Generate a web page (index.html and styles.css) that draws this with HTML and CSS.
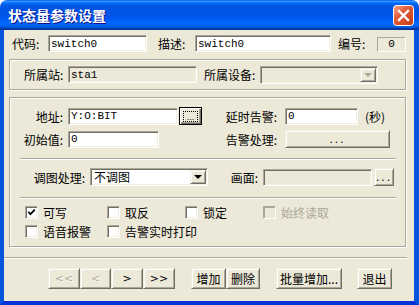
FILE: index.html
```html
<!DOCTYPE html>
<html lang="zh-CN">
<head>
  <meta charset="UTF-8">
  <title>状态量参数设置</title>
  <link rel="stylesheet" href="styles.css">
</head>
<body>

<div class="window">
  <div class="titlebar">
    <span class="title">状态量参数设置</span>
    <svg class="close" width="21" height="21" viewBox="0 0 21 21">
      <defs>
        <linearGradient id="closeGrad" x1="0" y1="0" x2="1" y2="1">
          <stop offset="0" stop-color="#F3A98F"/>
          <stop offset="0.4" stop-color="#E25B36"/>
          <stop offset="1" stop-color="#C13C14"/>
        </linearGradient>
      </defs>
      <rect x="0.5" y="0.5" width="20" height="20" rx="3" fill="url(#closeGrad)" stroke="#fff"/>
      <path d="M6 6L15 15M15 6L6 15" stroke="#fff" stroke-width="2.4" stroke-linecap="square"/>
    </svg>
  </div>

  <div class="client">
    <!-- 代码 / 描述 / 编号 -->
    <div class="row row-head">
      <label class="lbl w-code">代码:</label>
      <input class="field w-code-in" type="text" value="switch0" readonly>
      <label class="lbl w-desc">描述:</label>
      <input class="field w-desc-in" type="text" value="switch0" readonly>
      <label class="lbl w-no">编号:</label>
      <span class="numbox">0</span>
    </div>

    <!-- 所属站 -->
    <div class="group group-station">
      <label class="lbl w-sta">所属站:</label>
      <input class="field disabled w-sta-in" type="text" value="sta1" readonly>
      <label class="lbl w-dev">所属设备:</label>
      <div class="combo sunken disabled w-dev-in">
        <span class="combo-text"></span>
        <span class="combo-btn"><i class="tri tri-off"></i></span>
      </div>
    </div>

    <!-- 地址等 -->
    <div class="group group-main">
      <div class="row row-a">
        <label class="lbl r w-l1">地址:</label>
        <input class="field w-addr" type="text" value="Y:O:BIT" readonly>
        <button class="btn btn-focus w-addr-btn"><span class="focus-rect">...</span></button>
        <label class="lbl r w-l2a">延时告警:</label>
        <input class="field w-delay" type="text" value="0" readonly>
        <span class="unit">(秒)</span>
      </div>
      <div class="row row-b">
        <label class="lbl r w-l1">初始值:</label>
        <input class="field w-init" type="text" value="0" readonly>
        <label class="lbl r w-l2b">告警处理:</label>
        <button class="btn dots w-alarm">...</button>
      </div>

      <div class="sep"></div>

      <div class="row row-c">
        <label class="lbl r w-l3">调图处理:</label>
        <div class="combo sunken w-pic">
          <span class="combo-text">不调图</span>
          <span class="combo-btn"><i class="tri"></i></span>
        </div>
        <label class="lbl r w-l4">画面:</label>
        <input class="field disabled w-screen" type="text" value="" readonly>
        <button class="btn dots w-screen-btn">...</button>
      </div>

      <div class="sep"></div>

      <div class="checks">
        <label class="check"><span class="chk">
          <svg width="9" height="9" viewBox="0 0 9 9"><path d="M1.3 3.8L3.4 6.2L7.8 1.6" fill="none" stroke="#000" stroke-width="1.7"/></svg>
        </span>可写</label>
        <label class="check"><span class="chk"></span>取反</label>
        <label class="check"><span class="chk"></span>锁定</label>
        <label class="check off"><span class="chk"></span>始终读取</label>
        <label class="check"><span class="chk"></span>语音报警</label>
        <label class="check wide"><span class="chk"></span>告警实时打印</label>
      </div>
    </div>

    <div class="sep sep-full"></div>

    <div class="buttons">
      <button class="btn nav gray w32">&lt;&lt;</button>
      <button class="btn nav gray w31">&lt;</button>
      <button class="btn nav w32">&gt;</button>
      <button class="btn nav w32">&gt;&gt;</button>
      <button class="btn b-add">增加</button>
      <button class="btn b-del">删除</button>
      <button class="btn b-batch">批量增加...</button>
      <button class="btn b-exit">退出</button>
    </div>
  </div>
</div>

</body>
</html>
```

FILE: styles.css
```css
*{
  box-sizing: border-box;
}

body{
  margin: 0;
  background: #fff;
  font-family: "Noto Sans CJK SC", sans-serif;
  font-size: 12px;
  color: #000;
}

.window{
  width: 419px;
  height: 305px;
  display: flex;
  flex-direction: column;
}

/* title bar */
.titlebar{
  height: 30px;
  flex: none;
  display: flex;
  align-items: center;
  padding: 0 5px 0 8px;
  border-radius: 7px 7px 0 0;
  background: linear-gradient(to bottom, #0058EE 0%, #3593FF 4%, #288EFF 6%, #127DFF 8%, #036FFC 10%, #0262EE 14%, #0057E5 20%, #0054E3 24%, #0055EB 56%, #005BF5 66%, #026AFE 76%, #0062EF 86%, #0052D6 92%, #0040AB 94%, #003092 100%);
}
.title{
  flex: 1;
  color: #fff;
  font-size: 14px;
  font-weight: bold;
  line-height: 30px;
  text-shadow: 1px 1px #0F1089;
  white-space: nowrap;
}
.close{
  display: block;
  flex: none;
}

/* client area */
.client{
  flex: 1;
  background: #ECE9D8;
  border-style: solid;
  border-width: 0 5px 4px 4px;
  border-color: #0855DD #0855DD #0831D9 #0855DD;
  padding-top: 5px;
}

.row{
  display: flex;
  align-items: center;
  white-space: nowrap;
}

.lbl{
  display: block;
  flex: none;
  line-height: 17px;
  white-space: nowrap;
}
.lbl.r{
  text-align: right;
}

/* sunken edit */
.field{
  display: block;
  flex: none;
  height: 17px;
  margin: 0;
  padding: 0 2px;
  border: 1px solid;
  border-color: #ACA899 #fff #fff #ACA899;
  box-shadow: inset 1px 1px #716F64, inset -1px -1px #F1EFE2;
  background: #fff;
  font-family: "Liberation Mono", monospace;
  font-size: 11px;
  color: #000;
  outline: none;
}
.field.disabled{
  background: #ECE9D8;
}

.sunken{
  border: 1px solid;
  border-color: #ACA899 #fff #fff #ACA899;
  box-shadow: inset 1px 1px #716F64, inset -1px -1px #F1EFE2;
  padding: 1px;
}

/* raised button */
.btn{
  display: block;
  flex: none;
  margin: 0;
  padding: 0;
  height: 18px;
  background: #ECE9D8;
  border: 1px solid;
  border-color: #F1EFE2 #716F64 #716F64 #F1EFE2;
  box-shadow: inset 1px 1px #fff, inset -1px -1px #ACA899;
  font-family: "Noto Sans CJK SC", sans-serif;
  font-size: 12px;
  color: #000;
  white-space: nowrap;
}
.btn.dots{
  font-family: "Liberation Sans", sans-serif;
  letter-spacing: 2px;
  line-height: 12px;
}
.btn-focus{
  border: 1px solid #000;
  box-shadow: inset 1px 1px #fff, inset -1px -1px #716F64, inset -2px -2px #ACA899;
  display: flex;
  align-items: center;
  justify-content: center;
}
.focus-rect{
  display: block;
  width: 15px;
  height: 11px;
  border: 1px dotted #000;
  font-family: "Liberation Sans", sans-serif;
  font-size: 9px;
  line-height: 11px;
  text-align: center;
  overflow: hidden;
}

/* combo */
.combo{
  display: flex;
  flex: none;
  height: 18px;
  background: #fff;
}
.combo.disabled{
  background: #ECE9D8;
}
.combo-text{
  flex: 1;
  padding-left: 2px;
  line-height: 14px;
  font-size: 12px;
}
.combo-btn{
  width: 16px;
  flex: none;
  display: flex;
  align-items: center;
  justify-content: center;
  background: #ECE9D8;
  border: 1px solid;
  border-color: #F1EFE2 #716F64 #716F64 #F1EFE2;
  box-shadow: inset 1px 1px #fff, inset -1px -1px #ACA899;
}
.tri{
  display: block;
  width: 0;
  height: 0;
  border-left: 4px solid transparent;
  border-right: 4px solid transparent;
  border-top: 4px solid #000;
}
.tri-off{
  border-top-color: #ACA899;
}

/* etched groups */
.group{
  margin-left: 5px;
  width: 397px;
  border: 1px solid #ACA899;
  box-shadow: inset 1px 1px #fff, 1px 1px #fff;
}

.sep{
  height: 2px;
  border-top: 1px solid #ACA899;
  border-bottom: 1px solid #fff;
}

/* head row */
.row-head{
  height: 17px;
  padding-left: 8px;
}
.w-code{ width: 36px; }
.w-code-in{ width: 99px; }
.w-desc{ width: 37px; margin-left: 11px; }
.w-desc-in{ width: 136px; }
.w-no{ width: 39px; margin-left: 7px; }
.numbox{
  width: 29px;
  height: 15px;
  margin-top: 2px;
  display: flex;
  align-items: center;
  justify-content: center;
  border: 1px solid;
  border-color: #ACA899 #fff #fff #ACA899;
  font-family: "Liberation Mono", monospace;
  font-size: 11px;
  line-height: 13px;
}

/* station group */
.group-station{
  margin-top: 7px;
  height: 31px;
  display: flex;
  align-items: center;
  padding-left: 14px;
}
.w-sta{ width: 44px; }
.w-sta-in{ width: 129px; }
.w-dev{ width: 56px; margin-left: 7px; }
.w-dev-in{ width: 118px; }

/* main group */
.group-main{
  margin-top: 7px;
  height: 150px;
}
.row-a{
  height: 18px;
  margin-top: 9px;
}
.row-b{
  height: 18px;
  margin-top: 5px;
}
.w-l1{ width: 58px; padding-right: 5px; }
.w-addr{ width: 110px; }
.w-addr-btn{ width: 23px; margin-left: 1px; }
.w-l2a{ width: 83px; padding-right: 8px; }
.w-delay{ width: 73px; }
.unit{ margin-left: 7px; }
.w-init{ width: 91px; }
.w-l2b{ width: 126px; padding-right: 8px; }
.w-alarm{ width: 105px; }

.group-main .sep{
  margin-left: 10px;
  width: 376px;
}
.row-b + .sep{
  margin-top: 10px;
}
.row-c{
  height: 18px;
  margin-top: 8px;
}
.w-l3{ width: 80px; padding-right: 5px; }
.w-pic{ width: 118px; }
.w-l4{ width: 55px; padding-right: 5px; }
.w-screen{ width: 109px; }
.w-screen-btn{ width: 20px; margin-left: 2px; }
.row-c + .sep{
  margin-top: 11px;
}

/* checkboxes */
.checks{
  display: grid;
  grid-template-columns: 82px 78px 78px auto;
  grid-auto-rows: 13px;
  row-gap: 6px;
  margin: 7px 0 0 15px;
}
.check{
  display: flex;
  align-items: center;
  gap: 5px;
  line-height: 13px;
  white-space: nowrap;
}
.check.wide{
  grid-column: span 2;
}
.chk{
  width: 13px;
  height: 13px;
  flex: none;
  display: flex;
  align-items: center;
  justify-content: center;
  border: 1px solid;
  border-color: #ACA899 #fff #fff #ACA899;
  box-shadow: inset 1px 1px #716F64, inset -1px -1px #F1EFE2;
  background: #fff;
}
.check.off{
  color: #ACA899;
}
.check.off .chk{
  background: #ECE9D8;
  border-color: #ACA899 #fff #fff #ACA899;
  box-shadow: inset 1px 1px #ACA899;
}

/* bottom buttons */
.sep-full{
  margin-top: 10px;
  width: 403px;
}
.buttons{
  display: flex;
  margin-top: 9px;
  padding-left: 44px;
}
.buttons .btn{
  height: 21px;
}
.btn.nav{
  font-family: "DejaVu Sans", sans-serif;
  font-size: 11px;
  font-weight: normal;
}
.btn.gray{
  color: #ACA899;
  text-shadow: 1px 1px #fff;
}
.w32{ width: 32px; }
.w31{ width: 31px; }
.b-add{ width: 35px; margin-left: 16px; }
.b-del{ width: 34px; }
.b-batch{ width: 66px; margin-left: 16px; }
.b-exit{ width: 35px; margin-left: 15px; }
```
